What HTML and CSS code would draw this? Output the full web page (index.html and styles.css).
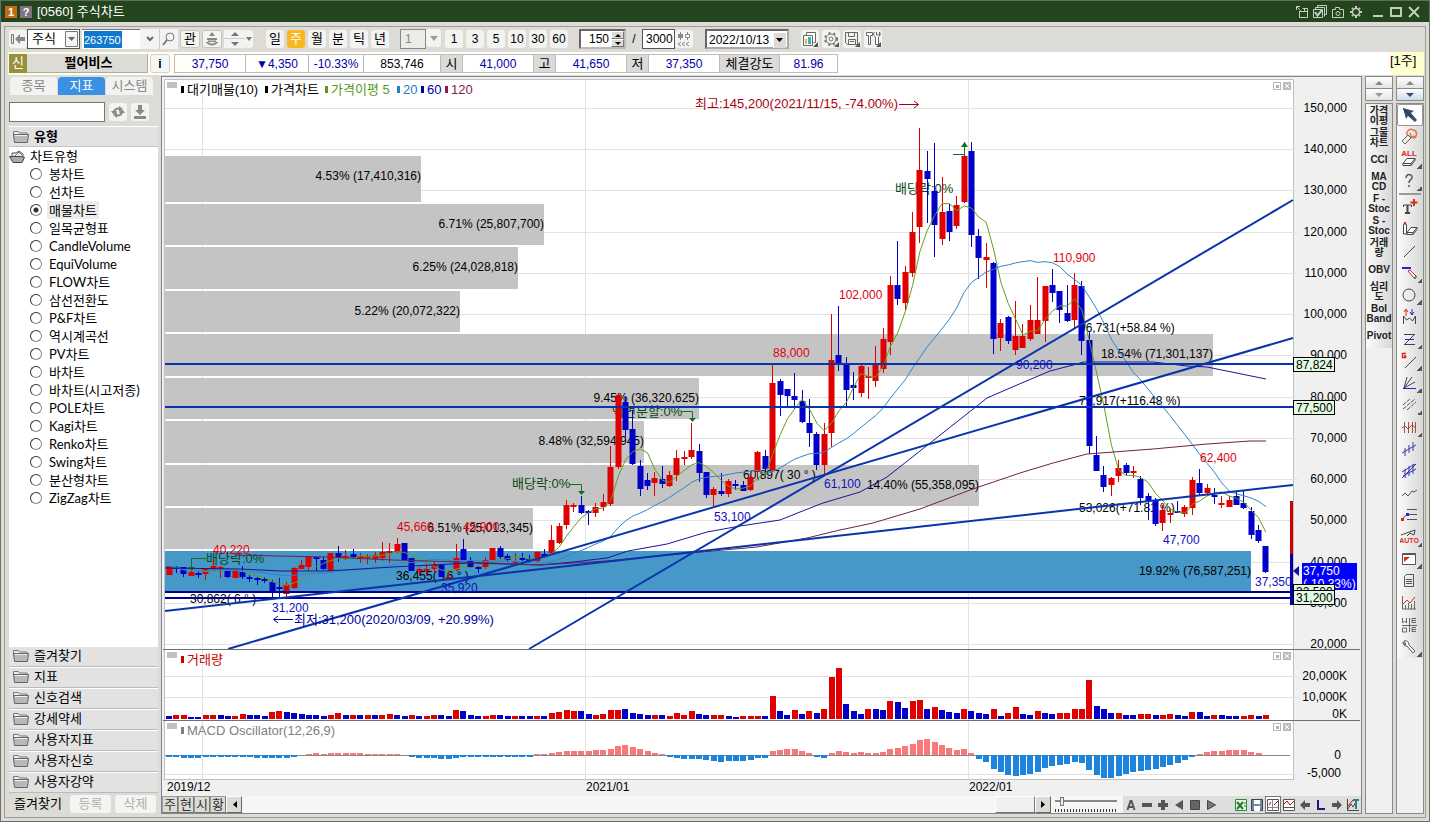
FILE: index.html
```html
<!DOCTYPE html>
<html lang="ko">
<head>
<meta charset="UTF-8">
<meta name="viewport" content="width=device-width, initial-scale=1.0">
<title>[0560] 주식차트</title>
<link rel="stylesheet" href="styles.css">
</head>
<body>

<header class="titlebar">
  <span class="badge-num">1</span>
  <button class="badge-help">?</button>
  <h1>[0560] 주식차트</h1>
  <div class="window-buttons">
    <button aria-label="Pop out"><svg width="14" height="14" viewBox="0 0 14 14"><path d="M1.500 5V1.500H5M1.500 1.500l4 4M4.500 7v5.500h8v-9h-5M4 6.500h8M9.500 3v3"/></svg></button>
    <button aria-label="Copy"><svg width="14" height="14" viewBox="0 0 14 14"><path d="M4.500 3V.5h9v9H11M2.500 5V2.500h9v9M.5 4.500h9v8h-9z"/><path d="M2 7l2.500 3.500L9 5" stroke-width="2"/></svg></button>
    <button aria-label="Capture"><svg width="14" height="14" viewBox="0 0 14 14"><path d="M1.500 4.500h3v-2h4v2h4v8h-11z"/><circle cx="7" cy="8.500" r="2"/></svg></button>
    <button aria-label="Settings"><svg width="14" height="14" viewBox="0 0 14 14"><circle cx="7" cy="7" r="3.500" stroke-width="1.500"/><path d="M7 1v2M7 11v2M1 7h2M11 7h2M3 3l1 1M10 10l1 1M3 11l1-1M10 4l1-1" stroke-width="2"/></svg></button>
    <button class="min" aria-label="Minimize"><svg width="14" height="14" viewBox="0 0 14 14"><path d="M2 11h10" stroke-width="2"/></svg></button>
    <button class="max" aria-label="Maximize"><svg width="14" height="14" viewBox="0 0 14 14"><path d="M2 3h10v8H2z" stroke-width="2"/></svg></button>
    <button class="close" aria-label="Close"><svg width="14" height="14" viewBox="0 0 14 14"><path d="M2 2l10 10M12 2L2 12" stroke-width="2"/></svg></button>
  </div>
</header>

<div class="frame">
  <div class="toolbar">
    <button class="tb" aria-label="Collapse"><svg width="16" height="14" viewBox="0 0 16 14"><path d="M1.500 2.500h2v9h-2z" fill="none" stroke="#777"/><path d="M5 7l5-5v3h5v4h-5v3z" fill="#888"/></svg></button>
    <div class="combo w-type">
      <select aria-label="종류"><option>주식</option></select>
      <svg class="combo-arrow boxed" viewBox="0 0 13 16"><path d="M.5 .5h12v15H.5z" fill="#f4f4f2" stroke="#777"/><path d="M3 6h7l-3.500 4z" fill="#666"/></svg>
    </div>
    <div class="code-box">
      <input type="text" value="263750" aria-label="종목코드">
    </div>
    <button class="tb flat" aria-label="Code list"><svg width="10" height="8" viewBox="0 0 10 8"><path d="M2 2l3 3 3-3" fill="none" stroke="#666" stroke-width="2"/></svg></button>
    <button class="tb flat" aria-label="Search"><svg width="14" height="14" viewBox="0 0 14 14"><circle cx="8" cy="5" r="4" fill="none" stroke="#777"/><path d="M5 8l-4 5" stroke="#777" stroke-width="2"/></svg></button>
    <button class="tb round">관</button>
    <button class="tb round" aria-label="Sector"><svg width="16" height="16" viewBox="0 0 16 16"><path d="M5 5l3-4 3 4zM3 7h10v2H3z" fill="#888"/><path d="M2 11c3 4 9 4 12 0M4 10h8c-1 4-7 4-8 0z" fill="#999" stroke="#888"/></svg></button>
    <div class="updown">
      <button aria-label="Previous"><svg width="8" height="5" viewBox="0 0 8 5"><path d="M4 0l4 4H0z"/></svg></button>
      <button aria-label="Next"><svg width="8" height="5" viewBox="0 0 8 5"><path d="M0 1h8L4 5z"/></svg></button>
    </div>
    <button class="tb tiny" aria-label="More"><svg width="6" height="4" viewBox="0 0 6 4"><path d="M0 0h6L3 4z" fill="#777"/></svg></button>

    <div class="periods">
      <button class="tb">일</button>
      <button class="tb on">주</button>
      <button class="tb">월</button>
      <button class="tb">분</button>
      <button class="tb">틱</button>
      <button class="tb">년</button>
    </div>

    <div class="unit">
      <input type="text" value="1" disabled aria-label="주기">
      <button class="tb" aria-label="주기 목록"><svg width="8" height="5" viewBox="0 0 8 5"><path d="M0 0h8L4 5z" fill="#999"/></svg></button>
    </div>
    <div class="periods minutes">
      <button class="tb">1</button>
      <button class="tb">3</button>
      <button class="tb">5</button>
      <button class="tb">10</button>
      <button class="tb">30</button>
      <button class="tb">60</button>
    </div>

    <div class="spin">
      <input type="text" value="150" aria-label="표시 개수">
      <div class="spin-buttons">
        <button aria-label="Increase"><svg width="6" height="3" viewBox="0 0 6 3"><path d="M3 0l3 3H0z"/></svg></button>
        <button aria-label="Decrease"><svg width="6" height="3" viewBox="0 0 6 3"><path d="M0 0h6L3 3z"/></svg></button>
      </div>
    </div>
    <span class="slash">/</span>
    <input class="total" type="text" value="3000" aria-label="전체 개수">
    <button class="tb" aria-label="Load more"><svg width="15" height="16" viewBox="0 0 15 16"><path d="M3.500 1v8M10.500 1v8M8 11l-3 2 3 2M4 11l-3 2 3 2M12 11l-3 2 3 2" fill="none" stroke="#888"/><path d="M1 3h5v4H1z" fill="#888"/><path d="M8.500 3.500h4v3h-4z" fill="#fff" stroke="#888"/></svg></button>
    <div class="combo w-date">
      <select aria-label="날짜"><option>2022/10/13</option></select>
      <svg class="combo-arrow" viewBox="0 0 13 16"><path d="M0 0h13v16H0z" fill="#dcdbd5"/><path d="M.5 16V.5H13" fill="none" stroke="#fff"/><path d="M3 6h7l-3.500 4z" fill="#000"/></svg>
    </div>
    <div class="tools">
      <button class="tb" aria-label="Compare"><svg width="17" height="17" viewBox="0 0 17 17"><path d="M4.500 4.500V1.500h9v10h-2M1.500 4.500h9v10h-9z" fill="#fff" stroke="#666"/><path d="M3 8h2v5H3z" fill="#e8b820"/><path d="M6 6h3v7H6z" fill="#3ab0c0"/><path d="M16 11v5h-5z" fill="#555"/></svg></button>
      <button class="tb" aria-label="Settings"><svg width="17" height="17" viewBox="0 0 17 17"><circle cx="8" cy="8" r="5" fill="none" stroke="#777"/><circle cx="8" cy="8" r="6" fill="none" stroke="#777" stroke-width="2" stroke-dasharray="2 3"/><circle cx="8" cy="8" r="2" fill="none" stroke="#777"/><path d="M16 11v5h-5z" fill="#555"/></svg></button>
      <button class="tb" aria-label="Save"><svg width="17" height="17" viewBox="0 0 17 17"><path d="M1.500 1.500h12v12h-10l-2-2zM4.500 1.500v4h6v-4M4.500 13v-4.500h7v5M6 10.500h4" fill="none" stroke="#666"/><path d="M16 11v5h-5z" fill="#555"/></svg></button>
      <button class="tb" aria-label="Tools"><svg width="17" height="17" viewBox="0 0 17 17"><path d="M1.500 1.500h6v3h-2v9h-2v-9h-2zM9.500 1c-2 3 0 5 1 5v7.500h3V6c2-1 2-4 1-5v3h-3V1" fill="#fff" stroke="#666"/><path d="M16 11v5h-5z" fill="#555"/></svg></button>
    </div>
  </div>

  <div class="quote">
    <span class="credit">신</span>
    <button class="stock-name">펄어비스</button>
    <button class="info">i</button>
    <dl class="prices">
      <dd class="down w71">37,750</dd>
      <dd class="down w62">▼4,350</dd>
      <dd class="down w54">-10.33%</dd>
      <dd class="w76">853,746</dd>
      <dt>시</dt><dd class="down w71">41,000</dd>
      <dt>고</dt><dd class="down w71">41,650</dd>
      <dt>저</dt><dd class="down w71">37,350</dd>
      <dt class="wide">체결강도</dt><dd class="down w58">81.96</dd>
    </dl>
    <span class="cycle">[1주]</span>
  </div>

  <div class="main">
    <aside class="sidebar">
      <nav class="tabs">
        <button>종목</button>
        <button class="active">지표</button>
        <button>시스템</button>
      </nav>
      <div class="find">
        <input type="text" aria-label="지표 검색">
        <button aria-label="Refresh"><svg width="14" height="14" viewBox="0 0 14 14"><path d="M3 8c0-4 3-5 6-4M11 6c0 4-3 5-6 4" fill="none" stroke="#888" stroke-width="2"/><path d="M8 1l4 3-4 3zM6 7l-4 3 4 3zM0 6h6L3 10zM8 8h6l-3-4z" fill="#888"/></svg></button>
        <button aria-label="Download"><svg width="14" height="14" viewBox="0 0 14 14"><path d="M5 0h4v5h3l-5 5-5-5h3zM1 11h12v3H1z" fill="#888"/></svg></button>
      </div>
      <h2 class="section"><svg class="folder"><use href="#folder"/></svg>유형</h2>
      <div class="tree">
        <div class="tree-root"><svg class="folder" viewBox="0 0 16 13"><path d="M3 7V3h4l3-2 4 3v4" fill="#eee" stroke="#555"/><path d="M6 6l4-4 3 3" fill="none" stroke="#777"/><path d="M.5 6.500H12l3.500 1-2.500 5H4z" fill="#aaa" stroke="#444"/></svg>차트유형</div>
        <label><input type="radio" name="kind"><span>봉차트</span></label>
        <label><input type="radio" name="kind"><span>선차트</span></label>
        <label><input type="radio" name="kind" checked><span>매물차트</span></label>
        <label><input type="radio" name="kind"><span>일목균형표</span></label>
        <label><input type="radio" name="kind"><span>CandleVolume</span></label>
        <label><input type="radio" name="kind"><span>EquiVolume</span></label>
        <label><input type="radio" name="kind"><span>FLOW차트</span></label>
        <label><input type="radio" name="kind"><span>삼선전환도</span></label>
        <label><input type="radio" name="kind"><span>P&amp;F차트</span></label>
        <label><input type="radio" name="kind"><span>역시계곡선</span></label>
        <label><input type="radio" name="kind"><span>PV차트</span></label>
        <label><input type="radio" name="kind"><span>바차트</span></label>
        <label><input type="radio" name="kind"><span>바차트(시고저종)</span></label>
        <label><input type="radio" name="kind"><span>POLE차트</span></label>
        <label><input type="radio" name="kind"><span>Kagi차트</span></label>
        <label><input type="radio" name="kind"><span>Renko차트</span></label>
        <label><input type="radio" name="kind"><span>Swing차트</span></label>
        <label><input type="radio" name="kind"><span>분산형차트</span></label>
        <label><input type="radio" name="kind"><span>ZigZag차트</span></label>
      </div>
      <div class="groups">
        <button><svg class="folder"><use href="#folder"/></svg>즐겨찾기</button>
        <button><svg class="folder"><use href="#folder"/></svg>지표</button>
        <button><svg class="folder"><use href="#folder"/></svg>신호검색</button>
        <button><svg class="folder"><use href="#folder"/></svg>강세약세</button>
        <button><svg class="folder"><use href="#folder"/></svg>사용자지표</button>
        <button><svg class="folder"><use href="#folder"/></svg>사용자신호</button>
        <button><svg class="folder"><use href="#folder"/></svg>사용자강약</button>
      </div>
      <div class="favorites">
        <span>즐겨찾기</span>
        <button disabled>등록</button>
        <button disabled>삭제</button>
      </div>
    </aside>

    <section class="chart-panel">
      <svg id="chart" viewBox="162 77 1199 719"></svg>
      <div class="chart-foot">
        <button class="mini">주</button>
        <button class="mini">현</button>
        <button class="mini">시</button>
        <button class="mini">황</button>
        <button class="scroll" aria-label="Scroll left"><svg width="5" height="7" viewBox="0 0 5 7"><path d="M5 0v7L1 3.500z"/></svg></button>
        <div class="track"><div class="thumb"></div></div>
        <button class="scroll" aria-label="Scroll right"><svg width="5" height="7" viewBox="0 0 5 7"><path d="M0 0v7l4-3.500z"/></svg></button>
        <div class="zoom">
          <input type="range" min="0" max="100" value="8" aria-label="확대">
        </div>
        <div class="foot-icons">
          <button aria-label="Auto"><svg viewBox="0 0 16 16"><path d="M4.500 13l3-9h1l3 9M6 10h4" fill="none" stroke="#555" stroke-width="2"/></svg></button>
          <button aria-label="Zoom out"><svg viewBox="0 0 16 16"><path d="M3 6h10v4H3z" fill="#555"/></svg></button>
          <button aria-label="Zoom in"><svg viewBox="0 0 16 16"><path d="M6 3h4v3h3v4h-3v3H6v-3H3V6h3z" fill="#555"/></svg></button>
          <button aria-label="Back"><svg viewBox="0 0 16 16"><path d="M12 3v10L4 8z" fill="#555"/></svg></button>
          <button aria-label="Stop"><svg viewBox="0 0 16 16"><path d="M3.500 3.500h9v9h-9z" fill="#666" stroke="#444"/></svg></button>
          <button aria-label="Play"><svg viewBox="0 0 16 16"><path d="M4.500 3.500v9l8-4.500z" fill="#777" stroke="#444"/></svg></button>
        </div>
        <div class="foot-icons last">
          <button aria-label="Excel"><svg viewBox="0 0 16 16"><path d="M2.500 2.500h11v11h-11z" fill="#e8f4e4" stroke="#2a8a3a"/><path d="M4 5l6 7M10 5l-6 7" stroke="#1f7a2f" stroke-width="2"/><path d="M11 6h2M11 9h2" stroke="#2a8a3a"/></svg></button>
          <button aria-label="Save"><svg viewBox="0 0 16 16"><path d="M2.500 2.500h11v11h-11z" fill="#7488a0" stroke="#33445a"/><path d="M5 3h6v4H5zM5 9h6v5H5z" fill="#fff"/></svg></button>
          <button class="pressed" aria-label="Cross"><svg viewBox="0 0 16 16"><path d="M2.500 2.500h11v11h-11z" fill="#fff" stroke="#555"/><path d="M7.500 3v10M3 10.500h10" stroke="#888"/><path d="M4 8l2-3M9 8l4-4" stroke="#c00"/></svg></button>
          <button aria-label="Line"><svg viewBox="0 0 16 16"><path d="M2.500 2.500h11v11h-11zM2 10.500h12" fill="#fff" stroke="#555"/><path d="M3 7l3-3 3 4 4-4" fill="none" stroke="#c00"/></svg></button>
          <button aria-label="Left"><svg viewBox="0 0 16 16"><path d="M3 8l5-5v3h5v4H8v3z" fill="#555"/></svg></button>
          <button aria-label="L"><svg viewBox="0 0 16 16"><path d="M5 3v9h7" fill="none" stroke="#1a1a70" stroke-width="2"/></svg></button>
          <button aria-label="Right"><svg viewBox="0 0 16 16"><path d="M13 8L8 3v3H3v4h5v3z" fill="#555"/></svg></button>
          <button aria-label="Chart tools"><svg viewBox="0 0 16 16"><path d="M2.500 2v11.500H14M3 12l3-5 2 3 4-7" fill="none" stroke="#444"/><path d="M3 9l6-7" stroke="#c00"/><path d="M8 3h6M11 3v9" stroke="#2a8080" stroke-width="2"/></svg></button>
        </div>
      </div>
    </section>

    <div class="strip">
      <div class="pager">
        <button aria-label="Up"><svg width="8" height="4" viewBox="0 0 8 4"><path d="M4 0l4 4H0z" fill="#888"/></svg></button>
        <button aria-label="Down"><svg width="8" height="4" viewBox="0 0 8 4"><path d="M0 0h8L4 4z" fill="#999"/></svg></button>
      </div>
      <div class="strip-body">
        <div class="strip-list presets">
          <button>가격<br>이평</button>
          <button>그물<br>차트</button>
          <button>CCI</button>
          <button>MA<br>CD</button>
          <button>F -<br>Stoc</button>
          <button>S -<br>Stoc</button>
          <button>거래<br>량</button>
          <button>OBV</button>
          <button>심리<br>도</button>
          <button>Bol<br>Band</button>
          <button>Pivot</button>
        </div>
      </div>
    </div>

    <div class="strip">
      <div class="pager">
        <button aria-label="Up"><svg width="8" height="4" viewBox="0 0 8 4"><path d="M4 0l4 4H0z" fill="#888"/></svg></button>
        <button class="live" aria-label="Down"><svg width="8" height="4" viewBox="0 0 8 4"><path d="M0 0h8L4 4z" fill="#345070"/></svg></button>
      </div>
      <div class="strip-body">
        <div class="strip-list draw">
          <button class="selected" aria-label="Select"><svg viewBox="0 0 20 20"><path d="M3 3l11 3-3 2 6 7-2 2-7-6-2 3z" fill="#345070"/><path d="M3 3l9 9" stroke="#1c2c40"/></svg></button>
          <button aria-label="Erase"><svg viewBox="0 0 20 20"><path d="M7 8c-1-4 3-7 6-5 4 0 5 6 1 8l-3-1M10 6l1 4 4-1" fill="none" stroke="#e07848" stroke-width="1.500"/><path d="M2 14l6-6 3 3-6 6z" fill="#eee" stroke="#666"/></svg></button>
          <button class="more" aria-label="Erase all"><svg viewBox="0 0 20 20"><text x="9" y="7" text-anchor="middle" class="all">ALL</text><path d="M3 14.500l4-5h8l-4 5zM3 14.500v2h8v-2M11 16.500l4-5v-2" fill="#fff" stroke="#444"/></svg></button>
          <button class="more" aria-label="Help"><svg viewBox="0 0 20 20"><path d="M6 7c0-5 7-4 6 0-1 2-3 2-3 5M9 14v2" fill="none" stroke="#555" stroke-width="1.500"/></svg></button>
          <hr>
          <button aria-label="Text"><svg viewBox="0 0 20 20"><path d="M3.500 10V8h8v2" fill="none" stroke="#444"/><path d="M7.500 8v8M5 16h5" fill="none" stroke="#444" stroke-width="2"/><path d="M14 2v7M10.500 5.500h7" stroke="#e02818" stroke-width="2"/></svg></button>
          <button aria-label="Eraser"><svg viewBox="0 0 20 20"><path d="M3.500 6v9h3V6L5 3zM7 13.500l4-5h6l-4 5zM7 13.500v2h6v-2M13 15.500l4-5v-2" fill="#fff" stroke="#444"/><path d="M4 4.500h2" stroke="#e02818" stroke-width="2"/></svg></button>
          <button aria-label="Line"><svg viewBox="0 0 20 20"><path d="M4 16L15 5" stroke="#444"/></svg></button>
          <button class="more" aria-label="Horizontal"><svg viewBox="0 0 20 20"><path d="M2 5h9" stroke="#2a20d0" stroke-width="2"/><path d="M8 8l6 7 2-2-6-6z" fill="#fff" stroke="#b03030"/><path d="M12 13l3 3 2-3" stroke="#2a8a5a" fill="none"/></svg></button>
          <button class="more" aria-label="Circle"><svg viewBox="0 0 20 20"><circle cx="9" cy="10" r="6" fill="none" stroke="#444"/></svg></button>
          <button aria-label="Wave"><svg viewBox="0 0 20 20"><path d="M3.500 17V9l3 4 3-2 3 3 3-5v8" fill="none" stroke="#444"/><path d="M6 9V3M4 5l2-3 2 3" fill="none" stroke="#e02818"/><path d="M12 2v6M10 5l2 3 2-3" fill="none" stroke="#2a20d0"/></svg></button>
          <button class="more" aria-label="Zigzag"><svg viewBox="0 0 20 20"><path d="M4 5.500h11M4 15.500h11M14 6l-9 9" fill="none" stroke="#444"/><path d="M5 10.500h9" stroke="#2a20d0"/></svg></button>
          <button class="more" aria-label="Gann"><svg viewBox="0 0 20 20"><path d="M5 17L16 6" stroke="#444"/><path d="M6 2.500H2.500v4h3V5H4" fill="none" stroke="#e02818" stroke-width="1.500"/></svg></button>
          <button class="more" aria-label="Fan"><svg viewBox="0 0 20 20"><path d="M4 15L7 4M4 15l8-11M4 15l11-6" stroke="#444" fill="none"/><path d="M3 15.500h13" stroke="#2a20d0"/></svg></button>
          <button class="more" aria-label="Channel"><svg viewBox="0 0 20 20"><path d="M3 10l7-6M3 14L15 4M7 15l9-8" stroke="#555" stroke-dasharray="4 1"/></svg></button>
          <button class="more" aria-label="Cycle"><svg viewBox="0 0 20 20"><path d="M4.500 5v11M8.500 5v11M12.500 5v11M15.500 5v11M2 11l3-2 3 3 4-4 4 3" fill="none" stroke="#a05038"/></svg></button>
          <button aria-label="Regression"><svg viewBox="0 0 20 20"><path d="M2 14L16 6M5 9v8M9 6v8M13 3v9" stroke="#3838a8"/></svg></button>
          <button aria-label="Regression channel"><svg viewBox="0 0 20 20"><path d="M2 11l13-8M3 15l13-7M5 8v9M9 5v10M13 3v10M2 17L16 3" stroke="#3838a8"/></svg></button>
          <button aria-label="Free line"><svg viewBox="0 0 20 20"><path d="M2 13l3-3 3 3 4-5 2 1 3-2" fill="none" stroke="#555"/></svg></button>
          <button aria-label="Levels"><svg viewBox="0 0 20 20"><path d="M7 4.500h10M9 9.500h8M7 14.500h10M2 14L8 9" stroke="#555"/><path d="M1 13h3v3H1z" fill="#e02818"/><path d="M6 8h3v3H6z" fill="#2a20d0"/></svg></button>
          <button class="more" aria-label="Auto"><svg viewBox="0 0 20 20"><path d="M1 8l14-5-1 5-4-2-3 3" fill="none" stroke="#444"/><text x="9" y="16" text-anchor="middle" class="all auto">AUTO</text></svg></button>
          <button class="more" aria-label="Window"><svg viewBox="0 0 20 20"><path d="M2.500 4.500h13v11h-13zM2 5.500h13" fill="#fff" stroke="#555"/><path d="M4 8h6l-6 5z" fill="#e02818"/></svg></button>
          <button aria-label="Document"><svg viewBox="0 0 20 20"><path d="M6.500 3.500h7v12h-9v-10zM6 8.500h6M6 10.500h6M6 12.500h6" fill="none" stroke="#555"/></svg></button>
          <button aria-label="Chart"><svg viewBox="0 0 20 20"><path d="M2.500 3v13H16M5.500 16v-4M8.500 16v-6M11.500 16v-5M14.500 16V8" fill="none" stroke="#666"/><path d="M3 11l4-4 3 3 5-6" fill="none" stroke="#e02818"/></svg></button>
          <button aria-label="Grid"><svg viewBox="0 0 20 20"><path d="M2.500 3v5l2-2 2 2V3M9.500 3v14M16 3.500h-4v4h4M12 5.500h4M2 10.500h15M2.500 13v4h4v-4zM16 12.500h-4v4h4M12 14.500h4" fill="none" stroke="#666"/></svg></button>
          <button class="more" aria-label="Wrench"><svg viewBox="0 0 20 20"><path d="M3 5c0 4 3 4 4 4l6 7 2-2-6-6c0-3-2-5-5-4l2 3-1 1z" fill="#fff" stroke="#555"/></svg></button>
        </div>
      </div>
    </div>
  </div>
</div>

<svg width="0" height="0" class="defs">
  <symbol id="folder" viewBox="0 0 16 13">
    <path d="M.5 5V1.500h5l1 1.500h7.500v2" fill="#eee" stroke="#777"/>
    <path d="M.5 4.500h15l-1 8h-13z" fill="#b8b8b8" stroke="#666"/>
    <path d="M2 5.500h12" stroke="#f0f0f0"/>
  </symbol>
</svg>

<script src="chart.js"></script>
</body>
</html>
```

FILE: styles.css
```css
* {
  box-sizing: border-box;
}
body {
  display: flex;
  flex-direction: column;
  min-height: 100vh;
  margin: 0;
  background: #dcdbd5;
  border: 1px solid #6c706a;
  border-width: 0 1px 1px;
  font: 13px/18px "Liberation Sans", "Noto Sans CJK KR", sans-serif;
  color: #000;
}
button, input, select {
  margin: 0;
  padding: 0;
  border: 0;
  border-radius: 0;
  font: inherit;
  color: inherit;
}
button {
  display: flex;
  align-items: center;
  justify-content: center;
  background: none;
}
.defs {
  position: absolute;
}

/* title bar */
.titlebar {
  display: flex;
  align-items: center;
  height: 22px;
  padding: 0 8px 0 4px;
  background: #24441d;
  border-top: 1px solid #5b7055;
  color: #fff;
}
.titlebar h1 {
  margin: 0 0 0 5px;
  font-size: 13px;
  font-weight: normal;
}
.badge-num, .badge-help {
  width: 12px;
  height: 12px;
  font-size: 11px;
  line-height: 12px;
  font-weight: bold;
  text-align: center;
}
.badge-num {
  background: #c46a10;
}
.badge-help {
  margin-left: 3px;
  background: #7d7480;
}
.window-buttons {
  display: flex;
  gap: 4px;
  margin-left: auto;
}
.window-buttons svg {
  fill: none;
  stroke: #c3cfc0;
}
.window-buttons .min {
  margin-left: 4px;
}

/* outer frame */
.frame {
  display: flex;
  flex-direction: column;
  flex: 1;
  margin: 4px 3px 3px;
  border: 1px solid #a09c9a;
}
.toolbar {
  display: flex;
  align-items: center;
  height: 24px;
  padding-left: 4px;
  font-size: 12px;
}
.tb {
  flex: none;
  width: 18px;
  height: 18px;
  border-radius: 3px;
  background: #f3f3f1;
}
.tb.flat {
  width: 19px;
  height: 20px;
  border-radius: 0;
}
.tb.flat + .tb.flat {
  border-left: 1px solid #ccc;
}
.tb.round {
  width: 20px;
  margin-left: 2px;
  border: 1px solid #c4c4c0;
  font-size: 13px;
}
.tb.tiny {
  width: 8px;
}
.tb.on {
  background: #f8b820;
  color: #fff;
}
.combo {
  display: grid;
  height: 20px;
  background: #fff;
  border: 1px solid #555;
}
.combo select {
  grid-area: 1 / 1;
  width: 100%;
  appearance: none;
  background: none;
  padding-left: 4px;
}
.combo-arrow {
  grid-area: 1 / 1;
  place-self: center end;
  width: 13px;
  height: 16px;
  margin-right: 1px;
  pointer-events: none;
}
.w-type {
  width: 53px;
  font-size: 13px;
}
.w-date {
  width: 84px;
  margin-left: 12px;
  border-width: 2px;
  border-color: #666 #aaa #aaa #666;
}
.w-date select {
  padding-left: 2px;
}
.code-box {
  width: 58px;
  height: 20px;
  margin-left: 2px;
  padding: 1px 2px;
  background: #fff;
  border-top: 1px solid #777;
}
.code-box input {
  display: block;
  width: 38px;
  height: 17px;
  font-size: 11px;
  background: #0f78d0;
  color: #fff;
}
.updown {
  width: 21px;
  margin-left: 2px;
  background: #f3f3f1;
}
.updown button {
  width: 100%;
  height: 9px;
  fill: #777;
}
.updown button:first-child {
  border-bottom: 1px solid #ccc;
}
.periods {
  display: flex;
  gap: 3px;
  margin-left: 13px;
  font-size: 13px;
}
.unit {
  display: flex;
  margin-left: 11px;
}
.unit input {
  width: 26px;
  height: 20px;
  padding-left: 4px;
  background: #ecebe8;
  border: 1px solid #888;
  color: #888;
}
.unit .tb {
  width: 15px;
}
.minutes {
  margin-left: 4px;
  font-size: 12px;
}
.spin {
  display: flex;
  width: 47px;
  height: 20px;
  margin-left: 11px;
  background: #fff;
  border: 2px solid;
  border-color: #666 #bbb #bbb #666;
}
.spin input {
  width: 28px;
  text-align: right;
}
.spin-buttons {
  margin-left: 2px;
}
.spin-buttons button {
  width: 13px;
  height: 8px;
  background: #dcdbd5;
  border: 1px solid;
  border-color: #fff #777 #777 #fff;
}
.slash {
  width: 16px;
  text-align: center;
}
.total {
  width: 33px;
  height: 20px;
  padding-left: 3px;
  border: 1px solid #555;
}
.tools {
  display: flex;
  gap: 3px;
  margin-left: 12px;
}

/* quote row */
.quote {
  display: flex;
  align-items: center;
  height: 23px;
  margin: 1px 1px 0 3px;
  background: linear-gradient(to right, #ffffd8 0, #fff 200px);
  font-size: 12px;
}
.credit {
  width: 18px;
  height: 19px;
  margin-left: 1px;
  background: #98903a;
  color: #fff;
  text-align: center;
  font-size: 13px;
}
.stock-name {
  width: 121px;
  height: 19px;
  padding-left: 3px;
  background: #dcdbd5;
  border: 1px solid #aaa;
  border-width: 0 1px 1px 0;
  font-size: 13px;
  font-weight: bold;
}
.info {
  width: 20px;
  height: 19px;
  margin-left: 2px;
  background: #f6f6f4;
  border: 1px solid #d0d0cc;
  border-radius: 3px;
  font-weight: bold;
}
.prices {
  display: flex;
  height: 19px;
  margin: 0 0 0 4px;
  border: 1px solid #bdbdb5;
  border-right: 0;
  line-height: 18px;
  text-align: center;
}
.prices dd, .prices dt {
  margin: 0;
  border-right: 1px solid #bdbdb5;
}
.prices dt {
  width: 22px;
  background: #dadada;
  font-size: 13px;
}
.prices .wide {
  width: 60px;
}
.down {
  color: #0000a8;
}
.w54 { width: 55px; }
.w58 { width: 58px; }
.w62 { width: 63px; }
.w71 { width: 71px; }
.w76 { width: 77px; }
.cycle {
  width: 34px;
  margin-left: auto;
  align-self: stretch;
  background: #ffffd0;
  font-size: 13px;
}

/* main area */
.main {
  display: flex;
  flex: 1;
  gap: 3px;
  padding: 1px 1px 3px 4px;
}
.sidebar {
  display: flex;
  flex-direction: column;
  flex: none;
  width: 149px;
}
.tabs {
  display: flex;
  gap: 1px;
  padding: 1px 0 0 1px;
}
.tabs button {
  width: 47px;
  height: 18px;
  background: #f2f2f0;
  border-radius: 4px 4px 0 0;
  color: #888;
}
.tabs .active {
  background: #3a90e2;
  color: #fff;
}
.find {
  display: flex;
  align-items: center;
  margin: 7px 0 4px;
}
.find input {
  width: 96px;
  height: 20px;
  background: #fff;
  border: 1px solid #777;
}
.find button {
  width: 18px;
  height: 18px;
  margin-left: 4px;
  background: #f3f3f1;
  border-radius: 3px;
}
.folder {
  flex: none;
  width: 16px;
  height: 13px;
  margin-right: 5px;
}
.section {
  display: flex;
  align-items: center;
  height: 21px;
  margin: 0;
  padding-left: 4px;
  background: #e2e2e2;
  border-top: 1px solid #fff;
  border-bottom: 1px solid #c4c4c4;
  font-size: 13px;
}
.tree {
  flex: 1;
  background: #fff;
  font-family: Lato, "Noto Sans CJK KR", sans-serif;
}
.tree-root, .tree label {
  display: flex;
  align-items: center;
  height: 18px;
}
.tree label {
  padding-left: 21px;
}
.tree label span {
  margin-left: 5px;
  padding: 0 2px;
}
.tree input {
  appearance: none;
  width: 12px;
  height: 12px;
  border: 1px solid;
  border-color: #333 #888 #888 #333;
  border-radius: 50%;
  background: #fff;
}
.tree input:checked {
  background: radial-gradient(circle, #234 2px, #fff 3px);
}
.tree input:checked + span {
  background: #ececec;
}
.groups button {
  width: 100%;
  height: 21px;
  padding: 0 0 2px 4px;
  justify-content: flex-start;
  background: #e2e2e2;
  border-top: 1px solid #fff;
  border-bottom: 1px solid #bbb;
}
.favorites {
  display: flex;
  align-items: center;
  justify-content: space-between;
  height: 21px;
  padding: 0 2px 0 5px;
}
.favorites button {
  width: 41px;
  height: 18px;
  background: #f4f4f2;
  border-radius: 3px;
  color: #b0b0a8;
}
.favorites span {
  margin-right: 4px;
}

/* chart */
.chart-panel {
  flex: 1;
  min-width: 0;
  border: 1px solid #7f8490;
  background: #f0f0f0;
}
#chart {
  display: block;
  width: 100%;
  height: auto;
  font-size: 12px;
}
#chart .label {
  font-size: 13px;
}
.chart-foot {
  display: flex;
  height: 17px;
  background: #f6f6f6;
}
.chart-foot button {
  flex: none;
  width: 16px;
  height: 17px;
}
.chart-foot .mini, .chart-foot .scroll {
  background: #dcdbd5;
  border: 1px solid;
  border-color: #999 #777 #777 #999;
  color: #333;
}
.chart-foot .scroll {
  border-color: #fff #666 #666 #fff;
}
.track {
  flex: 1;
  display: flex;
  justify-content: flex-end;
}
.thumb {
  width: 40px;
  height: 17px;
  background: #f0f0ee;
  border: 1px solid;
  border-color: #fff #777 #777 #fff;
}
.zoom {
  width: 72px;
  padding: 0 4px;
  background:
    repeating-linear-gradient(to right, #333 0 1px, transparent 1px 3px) 4px 13px / 62px 3px no-repeat;
}
.zoom input {
  appearance: none;
  display: block;
  width: 62px;
  height: 10px;
  background: linear-gradient(#888, #888) 0 4px / 100% 2px no-repeat;
}
.zoom input::-webkit-slider-thumb {
  appearance: none;
  width: 4px;
  height: 9px;
  background: #eee;
  border: 1px solid #777;
}
.foot-icons {
  display: flex;
  background: #dedede;
}
.foot-icons.last {
  padding-left: 14px;
}
.foot-icons svg {
  flex: none;
  width: 16px;
  height: 16px;
}
.foot-icons .pressed {
  outline: 1px solid #777;
  outline-offset: -1px;
  background: #fff;
}

/* right strips */
.strip {
  display: flex;
  flex-direction: column;
  flex: none;
  width: 28px;
  gap: 2px;
}
.pager {
  border: 1px solid #8a8a8a;
}
.pager button {
  width: 100%;
  height: 11px;
  background: linear-gradient(#fff, #e4e4e4);
}
.pager button:first-child {
  height: 12px;
  border-bottom: 1px solid #8a8a8a;
}
.pager .live {
  background: linear-gradient(#fff, #cddcea);
}
.strip-body {
  flex: 1;
  border: 1px solid #8a8a8a;
  background: #f0f0f0;
}
.strip-list {
  background: linear-gradient(to right, #fbfbfb, #d8d8d8);
}
.strip-list button {
  width: 100%;
  height: 22px;
}
.presets {
  padding: 1px 0;
  font-size: 10px;
  line-height: 10px;
  font-weight: bold;
  color: #222;
}
.draw button svg {
  flex: none;
  width: 20px;
  height: 20px;
}
.draw .selected {
  background: #fff;
  border: 1px solid #999;
  border-radius: 2px;
}
.draw .more {
  background: linear-gradient(135deg, transparent 50%, #555 50%) right 1px bottom 1px / 5px 5px no-repeat;
}
.draw hr {
  height: 2px;
  margin: 1px 2px;
  border: 0;
  background: #999;
}
.draw .all {
  font-size: 8px;
  font-weight: bold;
  fill: #e02818;
}
.draw .auto {
  font-size: 7px;
}
```

FILE: chart.js
```js
const svg = document.getElementById('chart');
const RED = '#e00000', BLUE = '#0000c8', TREND = '#0a34ac';
const X0 = 169, STEP = 7.362;

// r/b, body top, body bottom, high, low
const candles = `
r 566 575 566 575|b 567 569 566 573|b 567 574 567 577|r 572 576 568 576|b 573 574 570 578
r 569 574 569 580|r 566 569 560 571|r 567 568 566 578|b 571 577 569 578|r 570 578 570 578
b 572 577 566 579|b 577 578 575 582|b 578 580 577 585|b 579 581 577 583|b 582 592 580 597
b 587 588 578 598|r 585 594 582 598|r 568 588 567 589|r 565 569 560 569|r 557 567 556 571
b 557 558 557 571|b 560 569 557 570|r 553 571 553 571|b 553 557 546 562|r 556 557 550 560
b 554 557 549 559|r 556 557 553 563|r 556 557 554 564|r 555 559 552 563|r 552 558 542 561
r 551 552 543 563|r 544 552 538 553|b 543 560 543 560|b 558 571 558 571|r 569 570 567 576
r 569 570 564 575|r 564 569 561 574|b 565 577 565 577|r 577 578 570 579|r 558 570 544 571
b 549 560 539 560|b 561 567 557 568|b 567 568 566 573|r 560 567 557 569|r 548 560 548 560
b 548 557 546 559|b 556 560 554 562|r 561 562 553 566|b 558 559 553 561|b 559 560 555 563
r 552 561 551 563|b 554 557 549 558|r 540 553 525 555|r 526 543 523 544|r 505 525 500 529
r 505 507 503 512|b 505 513 496 514|b 511 513 510 525|r 507 513 503 517|r 502 507 494 511
r 467 504 446 506|r 395 467 393 469|b 402 430 397 437|b 429 464 410 465|b 466 489 460 496
b 480 486 473 490|r 478 483 472 496|b 479 484 466 488|r 475 486 471 487|r 458 475 450 481
r 457 458 451 465|r 450 457 423 459|b 451 473 444 482|b 472 495 472 498|r 489 495 487 506
b 491 494 473 496|r 481 494 479 497|b 484 486 480 490|b 485 491 481 491|r 477 490 475 491
r 452 472 451 479|b 456 469 450 472|r 383 470 364 471|b 381 395 379 416|b 389 396 389 406
b 396 400 373 409|b 401 422 390 423|b 423 433 399 447|b 434 465 432 470|r 434 465 423 474
r 360 433 314 447|b 355 363 306 371|b 363 390 357 406|b 385 388 372 400|r 366 393 363 397
r 376 377 367 399|r 364 381 346 387|r 339 369 328 373|r 285 342 276 355|b 285 299 241 305
r 272 303 266 311|r 232 273 212 277|r 170 227 128 243|b 171 179 151 223|b 191 225 143 257
r 212 239 177 245|b 211 232 204 241|r 205 226 196 229|r 156 202 142 203|b 151 235 142 247
b 236 258 229 279|r 257 260 243 288|b 263 339 262 354|r 323 338 319 351|b 317 341 316 344
r 336 350 301 355|r 336 348 324 348|r 320 339 305 341|r 320 334 277 334|r 286 321 286 342
b 285 293 269 302|b 291 310 291 323|b 313 321 285 322|r 285 320 273 328|b 286 341 281 355
b 340 446 331 454|b 455 471 436 471|b 475 487 466 492|r 478 485 477 496|r 468 476 460 482
b 465 473 463 475|r 471 472 466 478|b 479 498 476 505|b 496 501 493 520|b 501 524 498 526
r 510 523 505 531|r 513 514 508 523|b 511 512 501 513|r 507 514 505 517|r 480 508 477 515
b 483 493 469 495|r 488 493 484 496|b 495 496 488 504|r 503 504 496 508|r 500 507 496 507
b 496 505 491 505|b 503 508 490 509|b 511 535 507 539|b 530 541 525 543|b 546 572 546 573`
  .trim().split(/[|\n]/).map(row => {
    const [c, top, bottom, high, low] = row.split(' ');
    return { color: c === 'r' ? RED : BLUE, up: c === 'r', top: +top, bottom: +bottom, high: +high, low: +low };
  });

const volume = `b3 r4 r4 b2 b2 r4 r4 b4 b3 r3 r5 b4 b4 b3 r7 r8 b7 b6 b5 b4 b4 b3 r4 r6 b4 r4 b4 r4 b4 r4
r5 b4 b3 r4 b3 r3 r4 b4 b3 r9 b8 b4 b3 r3 r4 b4 b3 r3 b3 b3 r3 b3 r6 r7 r9 r8 b8 b5 r4 r5
r9 r9 b10 b6 b5 b4 r4 b4 r3 r6 r4 r8 b5 b4 r4 r4 b3 b2 r3 r3 r3 b3 r23 b8 b4 r9 b5 r8 b6 r10
r42 r51 b15 b8 b5 r10 b10 b9 r18 b17 b11 r18 r19 b10 r12 b9 b7 b6 r10 b8 b6 b5 r10 b3 r6 r12 b5 b4 r8 b6
b5 r6 r6 r10 r10 r39 b13 b10 b6 r6 b4 b4 r5 r5 b4 r4 r5 b4 b3 r7 b7 b3 r4 b4 b3 b3 r3 r4 b3 r4`.split(/\s+/);

const macd = [-1,-1,-2,-2,-2,-1,-1,-1,-1,-1,-1,-1,-2,-2,-2,-2,-2,-1,0,1,2,1,2,2,2,2,2,1,1,1,
  1,1,0,-1,-2,-2,-2,-3,-3,-2,-1,-1,-1,-1,-1,-1,-1,-1,-1,-1,1,1,2,3,4,4,4,4,5,5,
  6,9,10,8,6,4,2,1,-1,-2,-3,-3,-3,-4,-5,-6,-5,-5,-5,-4,-2,-2,4,5,6,6,4,2,-1,-2,
  2,4,3,2,3,2,2,3,6,7,9,11,15,16,13,10,7,5,6,2,-3,-6,-13,-16,-19,-20,-19,-18,-16,-12,
  -10,-9,-8,-6,-7,-14,-19,-22,-22,-20,-18,-16,-15,-14,-13,-11,-9,-7,-4,-1,1,3,4,4,5,5,5,3,2,0];

// top, bottom, right edge, caption
const profile = [
  [156, 202, 421, '4.53% (17,410,316)'],
  [204, 245, 544, '6.71% (25,807,700)'],
  [247, 289, 518, '6.25% (24,028,818)'],
  [291, 332, 460, '5.22% (20,072,322)'],
  [334, 376, 1213, '18.54% (71,301,137)'],
  [378, 419, 699, '9.45% (36,320,625)'],
  [421, 463, 644, '8.48% (32,594,945)'],
  [465, 506, 979, '14.40% (55,358,095)'],
  [508, 549, 533, '6.51% (25,013,345)'],
  [551, 591, 1251, '19.92% (76,587,251)']
];

function el(name, attrs, text) {
  const node = document.createElementNS('http://www.w3.org/2000/svg', name);
  for (const key in attrs) node.setAttribute(key, attrs[key]);
  if (text !== undefined) node.textContent = text;
  svg.appendChild(node);
  return node;
}
function rect(x, y, width, height, fill, stroke = 'none') {
  el('rect', { x, y, width, height, fill, stroke });
}
function line(x1, y1, x2, y2, stroke, width = 1) {
  el('line', { x1, y1, x2, y2, stroke, 'stroke-width': width });
}
function path(d, stroke, fill = 'none') {
  el('path', { d, stroke, fill });
}
function text(x, y, value, fill = '#000', anchor = 'start', cls = 'num') {
  el('text', { x, y, fill, 'text-anchor': anchor, class: cls }, value);
}
function crisp(x) {
  return Math.round(x) + 0.5;
}
const cx = i => X0 + STEP * i;

// backgrounds and grid
rect(162, 77, 1199, 719, '#f0f0f0');
rect(164, 79, 1129, 700, '#fff');
path('M164.5 779V79.500H1293.500V779.500H164', '#c0c0c0');
for (const x of [202.5, 585.5, 968.5]) line(x, 80, x, 779, '#e2e2e2');
for (let p = 150; p >= 20; p -= 10) {
  const y = crisp(108 + (150 - p) * 4.123);
  line(165, y, 1298, y, '#e2e2e2');
  text(1347, y + 3, p + ',000', '#000', 'end');
}
for (const y of [676.5, 697.5, 774.5]) line(165, y, 1298, y, '#e2e2e2');

// volume by price
profile.forEach(([top, bottom, right, label], i) => {
  rect(165, top, right - 165, bottom - top, i === 9 ? '#4698c8' : '#c4c4c4');
  text(right, top + 24, label, '#000', 'end');
});

// annotations under the candles
const green = '#0b4a12';
text(206, 563, '배당락:0%', green, 'start', 'label');
text(512, 488, '배당락:0%', green, 'start', 'label');
text(612, 416, '액면분할:0%', green, 'start', 'label');
text(895, 193, '배당락:0%', green, 'start', 'label');
text(1079, 332, '96,731(+58.84 %)');
text(1079, 405, '79,917(+116.48 %)');
text(1079, 512, '53,026(+71.81 %)');
text(743, 479, '60,897( 30 ° )');
text(396, 580, '36,455( 16 ° )');
text(190, 603, '30,862( 6 ° )');

candles.forEach((c, i) => {
  const x = crisp(cx(i) - 0.5);
  line(x, c.high, x, c.low, c.color);
  rect(x - 3, c.top, 6, Math.max(2, c.bottom - c.top), c.color);
});

// event arrows
path('M206 558.500H191.500V568M569 484.500H581.500V492M681 411.500H692.500V419M953 154.500H964.500V145', '#14701c');
path('M188 567h7l-3.500 4zM578 491h7l-3.500 4zM689 418h7l-3.500 4zM961 147h7l-3.500-5z', 'none', '#14701c');

// moving averages
function average(n) {
  const close = candles.map(c => c.up ? c.top : c.bottom);
  return close.map((_, i) => {
    const part = close.slice(Math.max(0, i - n + 1), i + 1);
    return `${cx(i).toFixed(1)},${(part.reduce((a, b) => a + b) / part.length).toFixed(1)}`;
  }).join(' ');
}
function curve(points, stroke) {
  el('polyline', { points, fill: 'none', stroke });
}
curve(average(5), '#62a01c');
curve(average(20), '#2f86c8');
curve('165,568 240,569 280,571 327,571 393,567 470,563 540,565 573,562 607,558 628,551 667,544 707,532 740,526 780,520 800,512 823,503 860,492 887,477 920,451 987,398 1017,385 1050,371 1077,364 1083,362 1153,362 1187,366 1207,367 1266,379', '#1c149c');
curve('235,555 277,556 327,557 393,560 493,563 540,565 607,561 690,553 757,547 807,538 840,530 873,523 893,517 920,509 970,490 1020,473 1053,463 1087,454 1153,449 1207,444 1250,441 1266,441', '#702050');

// support and trend lines
line(165, 364, 1293, 364, TREND, 2);
line(165, 407, 1293, 407, TREND, 2);
line(165, 592, 1293, 592, '#00008c', 2);
line(165, 598, 1293, 598, '#00008c', 2);
line(165, 611, 1293, 485, TREND, 2);
line(228, 649, 1293, 338, TREND, 2);
line(529, 649, 1293, 200, TREND, 2);

// high and low captions
[[1053, 262, '110,900'], [839, 299, '102,000'], [773, 357, '88,000'], [1200, 462, '62,400'],
 [397, 531, '45,660'], [463, 531, '45,900'], [213, 554, '40,220']].forEach(t => text(...t, '#e00010'));
[[1016, 369, '90,200'], [824, 488, '61,100'], [714, 521, '53,100'], [1163, 544, '47,700'],
 [1255, 586, '37,350'], [441, 592, '35,920'], [272, 612, '31,200']].forEach(t => text(...t, '#1010c0'));
text(898, 108, '최고:145,200(2021/11/15, -74.00%)', '#a80010', 'end', 'label');
path('M899 104.500H918M914 101l4.500 3.500-4.500 3.500', '#a80010');
text(294, 624, '최저:31,200(2020/03/09, +20.99%)', '#0000a0', 'start', 'label');
path('M293 619.500H274M278 616l-4.500 3.500 4.500 3.500', '#0000a0');

// legends
function legend(x, y, label, fill) {
  rect(x, y - 8, 3, 7, fill);
  text(x + 6, y, label, fill, 'start', 'label');
}
legend(181, 94, '대기매물(10)', '#000');
legend(265, 94, '가격차트', '#000');
legend(325, 94, '가격이평 5', '#5a9a18');
legend(397, 94, '20', '#2080c8');
legend(421, 94, '60', '#0000a8');
legend(445, 94, '120', '#802050');
legend(181, 664, '거래량', '#c80000');
legend(181, 735, 'MACD Oscillator(12,26,9)', '#808080');
for (const y of [82, 652, 723]) {
  rect(167, y, 10, 6, '#c0c0c0');
  rect(1273.5, y + 0.5, 7, 7, '#fff', '#b8b8b8');
  rect(1276, y + 3, 3, 3, '#b0b0b0');
  rect(1283.5, y + 0.5, 7, 7, '#c0c0c0', '#b8b8b8');
  path(`M1285 ${y + 2}l4 4M1289 ${y + 2}l-4 4`, '#fff');
}

// volume and oscillator
volume.forEach((v, i) => {
  const h = +v.slice(1);
  rect(Math.round(cx(i)) - 3, 719 - h, 6, h, v[0] === 'r' ? RED : BLUE);
});
line(165, 755.5, 1290, 755.5, '#888');
macd.forEach((v, i) => {
  rect(Math.round(cx(i)) - 3, v > 0 ? 755 - v : 755, 6, Math.abs(v) + (v < 0 ? 1 : 0), v > 0 ? '#fa7878' : '#1c84dc');
});
line(163, 649.5, 1360, 649.5, '#707070');
line(163, 720.5, 1360, 720.5, '#707070');

// axes
text(1347, 680, '20,000K', '#000', 'end');
text(1347, 701, '10,000K', '#000', 'end');
text(1347, 718, '0K', '#000', 'end');
text(1341, 759, '0', '#000', 'end');
text(1341, 777, '-5,000', '#000', 'end');
text(167, 791, '2019/12');
text(586, 791, '2021/01');
text(969, 791, '2022/01');

// price tags
function tag(y, label) {
  rect(1293.5, y + 0.5, 41, 14, '#e2fbe2', '#000');
  text(1296, y + 12, label);
}
rect(1290, 501, 3, 53, '#d00000');
rect(1290, 554, 3, 51, '#0000b0');
path('M1293 571l6-5v10z', 'none', '#1010a0');
rect(1302, 563, 55, 27, '#0000ff');
text(1303, 575, '37,750', '#fff');
text(1303, 588, '(-10.33%)', '#fff');
tag(357, '87,824');
tag(400, '77,500');
tag(584, '32,500');
tag(590, '31,200');
```
